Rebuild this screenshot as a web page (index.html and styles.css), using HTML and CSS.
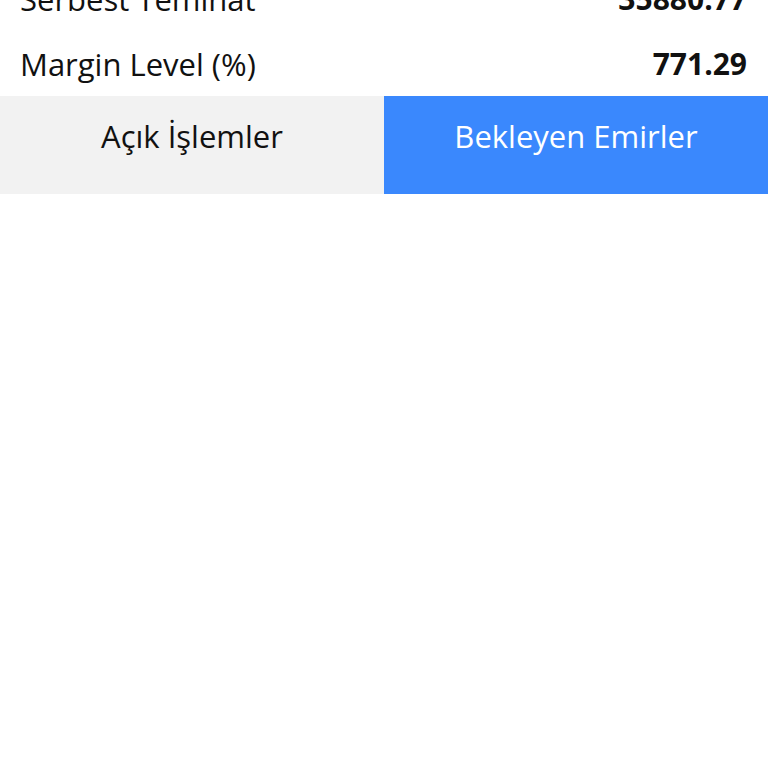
FILE: index.html
```html
<!DOCTYPE html>
<html>
<head>
    <title>Hesap Özeti</title>
    <link rel="stylesheet" href="styles.css">
</head>
<body>
    <!-- Account summary (scrolled, first row partly hidden) -->
    <div class="summary">
        <div class="summary-row">
            <span class="label">Serbest Teminat</span>
            <span class="value">35880.77</span>
        </div>
        <div class="summary-row">
            <span class="label">Margin Level (%)</span>
            <span class="value">771.29</span>
        </div>
    </div>

    <!-- Tabs -->
    <div class="tabs">
        <div class="tab">Açık İşlemler</div>
        <div class="tab active">Bekleyen Emirler</div>
    </div>

    <!-- Order list, empty for now -->
    <div class="order-list"></div>
</body>
</html>
```

FILE: styles.css
```css
/* Global styles */
body {
    font-family: "Open Sans", "Noto Sans", sans-serif;
    margin: 0;
    background-color: #ffffff;
    color: #111;
}

/* Summary rows */
.summary {
    margin-top: -34px;
}

.summary-row {
    display: flex;
    justify-content: space-between;
    align-items: center;
    height: 65px;
    padding: 0 21px 0 20px;
    font-size: 31px;
}

.value {
    font-weight: bold;
    font-size: 30px;
}

/* Tabs */
.tabs {
    display: flex;
}

.tab {
    flex: 1;
    height: 80px;
    padding-bottom: 18px;
    display: flex;
    align-items: center;
    justify-content: center;
    font-size: 31px;
    background-color: #f2f2f2;
    color: #111;
}

.tab.active {
    background-color: #3a88fd; /* Blue */
    color: #ffffff;
}
```
